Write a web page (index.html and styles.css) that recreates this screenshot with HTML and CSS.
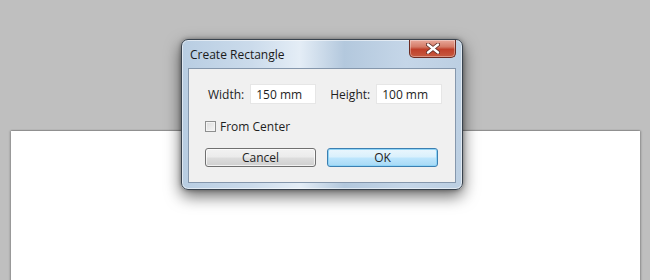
FILE: index.html
```html
<!DOCTYPE html>
<html lang="en">
<head>
  <meta charset="UTF-8">
  <title>Create Rectangle</title>
  <link rel="stylesheet" href="styles.css">
</head>
<body>
  <div class="sheet"></div>

  <div class="dialog">
    <div class="titlebar">
      <span class="title">Create Rectangle</span>
      <div class="close-btn">
        <svg width="14" height="11" viewBox="0 0 14 11">
          <path d="M2 1.5 L12 9.5 M12 1.5 L2 9.5" stroke="#5a2a24" stroke-width="4" stroke-linecap="round"/>
          <path d="M2 1.5 L12 9.5 M12 1.5 L2 9.5" stroke="#ffffff" stroke-width="2.4" stroke-linecap="round"/>
        </svg>
      </div>
    </div>
    <div class="client">
      <div class="size-row">
        <label class="field-label">Width:</label>
        <input class="field" type="text" value="150 mm">
        <label class="field-label height-label">Height:</label>
        <input class="field" type="text" value="100 mm">
      </div>
      <div class="check-row">
        <span class="checkbox"></span>
        <span>From Center</span>
      </div>
      <div class="button-row">
        <button class="btn">Cancel</button>
        <button class="btn btn-default">OK</button>
      </div>
    </div>
  </div>
</body>
</html>
```

FILE: styles.css
```css
body {
  margin: 0;
  padding: 131px 10px 0 11px;
  height: 280px;
  box-sizing: border-box;
  background-color: #bfbfbf;
  font-family: "Open Sans", "DejaVu Sans", sans-serif;
  font-size: 12px;
  color: #1e1e1e;
  overflow: hidden;
}
.sheet {
  height: 160px;
  background: #fff;
  box-shadow: -1px 0 2px rgba(0, 0, 0, 0.25), 1px 0 2px rgba(0, 0, 0, 0.25), 0 -1px 1px rgba(0, 0, 0, 0.1);
}
.dialog {
  position: absolute;
  left: 181px;
  top: 39px;
  width: 282px;
  height: 151px;
  box-sizing: border-box;
  padding: 0 6px 6px 6px;
  border: 1px solid #39434e;
  border-radius: 7px;
  background: linear-gradient(to right, #b8cde2 0%, #cbdbeb 25%, #e4edf6 42%, #b3c8dd 58%, #c5d6e8 80%, #bccfe2 100%);
  box-shadow: inset 0 0 0 1px rgba(255, 255, 255, 0.55), 0 6px 16px rgba(0, 0, 0, 0.6), 0 0 4px rgba(0, 0, 0, 0.35);
}
.titlebar {
  height: 28px;
  display: flex;
  align-items: flex-start;
  justify-content: space-between;
}
.title {
  margin-top: 6px;
  margin-left: 2px;
  color: #1a1a1a;
  font-size: 12px;
}
.close-btn {
  width: 45px;
  height: 17px;
  display: flex;
  align-items: center;
  justify-content: center;
  border: 1px solid #6b2b22;
  border-top: none;
  border-radius: 0 0 5px 5px;
  background: linear-gradient(to bottom, #e9a99b 0%, #d47b67 40%, #c0402a 55%, #c65a40 100%);
  box-shadow: inset 0 0 0 1px rgba(255, 255, 255, 0.35);
}
.client {
  height: 115px;
  box-sizing: border-box;
  border: 1px solid #8597ac;
  background: #f0f0f0;
  padding: 15px 0 0 16px;
}
.size-row {
  display: flex;
  align-items: center;
  height: 20px;
}
.field-label {
  margin-left: 3px;
  margin-right: 6px;
}
.height-label {
  margin-left: 14px;
}
.field {
  width: 66px;
  height: 20px;
  box-sizing: border-box;
  border: 1px solid #e6e6e6;
  background: #fff;
  padding: 0 0 0 5px;
  font-family: inherit;
  font-size: 12px;
  color: #1e1e1e;
}
.check-row {
  display: flex;
  align-items: center;
  gap: 4px;
  margin-top: 14px;
}
.checkbox {
  width: 11px;
  height: 11px;
  box-sizing: border-box;
  border: 1px solid #8e8f8f;
  background: linear-gradient(135deg, #dcdcdc, #f6f6f6);
  box-shadow: inset 0 0 0 1px #f4f4f4;
}
.button-row {
  display: flex;
  gap: 11px;
  margin-top: 13px;
}
.btn {
  width: 111px;
  height: 19px;
  padding: 0;
  border: 1px solid #707070;
  border-radius: 3px;
  background: linear-gradient(to bottom, #f2f2f2 0%, #ebebeb 48%, #dddddd 52%, #cfcfcf 100%);
  box-shadow: inset 0 0 0 1px rgba(255, 255, 255, 0.7);
  font-family: inherit;
  font-size: 12px;
  color: #1e1e1e;
  line-height: 16px;
}
.btn-default {
  border-color: #3c7fb1;
  background: linear-gradient(to bottom, #eaf6fd 0%, #d9f0fc 48%, #bee6fd 52%, #a7d9f5 100%);
  box-shadow: inset 0 0 0 1px #8fd4f7;
}
```
